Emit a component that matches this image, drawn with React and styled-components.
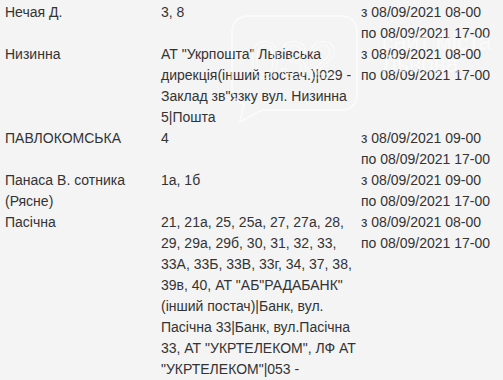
import React from "react";
import styled, { createGlobalStyle } from "styled-components";

const rows = [
  { street: "Нечая Д.", houses: "3, 8", fromTime: "08-00" },
  {
    street: "Низинна",
    houses:
      'АТ "Укрпошта" Львівська дирекція(інший постач.)|029 - Заклад зв"язку вул. Низинна 5|Пошта',
    fromTime: "08-00",
  },
  { street: "ПАВЛОКОМСЬКА", houses: "4", fromTime: "09-00" },
  { street: "Панаса В. сотника (Рясне)", houses: "1а, 1б", fromTime: "09-00" },
  {
    street: "Пасічна",
    houses:
      '21, 21а, 25, 25а, 27, 27а, 28, 29, 29а, 29б, 30, 31, 32, 33, 33А, 33Б, 33В, 33г, 34, 37, 38, 39в, 40, АТ "АБ"РАДАБАНК" (інший постач)|Банк, вул. Пасічна 33|Банк, вул.Пасічна 33, АТ "УКРТЕЛЕКОМ", ЛФ АТ "УКРТЕЛЕКОМ"|053 -',
    fromTime: "08-00",
  },
];

const App = () => {
  return (
    <>
      <GlobalStyle />
      <Wrapper>
        <Table>
          {rows.map((row) => (
            <Row key={row.street}>
              <Cell>{row.street}</Cell>
              <Cell>{row.houses}</Cell>
              <Cell>
                з 08/09/2021 {row.fromTime}
                <br />
                по 08/09/2021 17-00
              </Cell>
            </Row>
          ))}
        </Table>
        <Watermark width="503" height="140" viewBox="0 0 503 140">
          <path
            d="M250 16 H340 Q357 16 357 33 V93 Q357 110 340 110 H262 L240 122 L244 104 Q232 100 232 88 V33 Q232 16 250 16 Z"
            fill="none"
            stroke="#fff"
            strokeWidth="2"
          />
          <text
            x="294"
            y="78"
            fontSize="52"
            textAnchor="middle"
            fill="none"
            stroke="#fff"
            strokeWidth="1.2"
            fontFamily="Liberation Sans, Arial, sans-serif"
          >
            032
          </text>
          <text
            x="382"
            y="50"
            fontSize="23"
            fill="#fff"
            fontFamily="Liberation Sans, Arial, sans-serif"
          >
            сайт міста
          </text>
          <text
            x="382"
            y="72"
            fontSize="23"
            fill="#fff"
            fontFamily="Liberation Sans, Arial, sans-serif"
          >
            Львова
          </text>
        </Watermark>
      </Wrapper>
    </>
  );
};

const GlobalStyle = createGlobalStyle`
  body {
    margin: 0;
    background: #f4f4f4;
    font-family: "Liberation Sans", Arial, sans-serif;
  }
`;

const Wrapper = styled.div`
  position: relative;
  width: 503px;
  height: 380px;
  overflow: hidden;
  background: #f4f4f4;
`;

const Table = styled.div`
  display: flex;
  flex-direction: column;
  padding: 2px 0 0 5px;
`;

const Row = styled.div`
  display: grid;
  grid-template-columns: 156px 200px 1fr;
`;

const Cell = styled.div`
  padding-right: 3px;
  font-size: 14px;
  line-height: 21px;
  color: #333;
`;

const Watermark = styled.svg`
  position: absolute;
  left: 0;
  top: 0;
  opacity: 0.55;
  pointer-events: none;
`;

export default App;
